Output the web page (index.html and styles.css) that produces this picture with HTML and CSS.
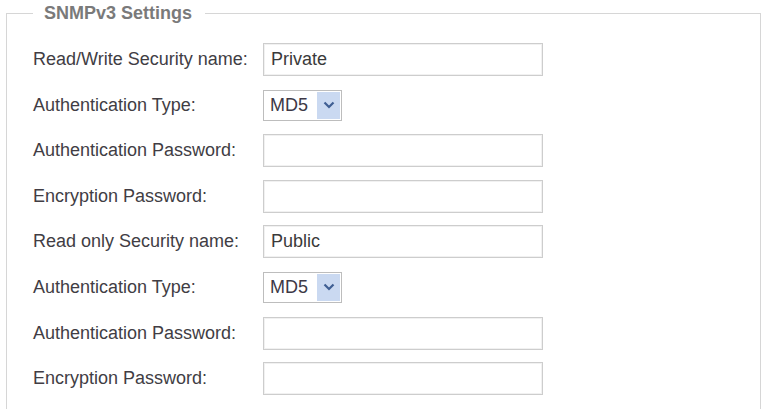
FILE: index.html
```html
<!DOCTYPE html>
<html>
<head>
<meta charset="utf-8">
<title>SNMPv3 Settings</title>
<link rel="stylesheet" href="styles.css">
</head>
<body>
<fieldset class="panel">
  <legend class="panel-title">SNMPv3 Settings</legend>
  <div class="rows">
    <label class="lbl">Read/Write Security name:</label>
    <input class="txt" type="text" value="Private">

    <label class="lbl">Authentication Type:</label>
    <span class="combo"><select class="combo-sel"><option>MD5</option></select><span class="combo-btn"><svg width="12" height="8" viewBox="0 0 12 8"><path d="M1.5 1.5 L6 6 L10.5 1.5" fill="none" stroke="#3f5f93" stroke-width="2.2"/></svg></span></span>

    <label class="lbl">Authentication Password:</label>
    <input class="txt" type="password" value="">

    <label class="lbl">Encryption Password:</label>
    <input class="txt" type="password" value="">

    <label class="lbl">Read only Security name:</label>
    <input class="txt" type="text" value="Public">

    <label class="lbl">Authentication Type:</label>
    <span class="combo"><select class="combo-sel"><option>MD5</option></select><span class="combo-btn"><svg width="12" height="8" viewBox="0 0 12 8"><path d="M1.5 1.5 L6 6 L10.5 1.5" fill="none" stroke="#3f5f93" stroke-width="2.2"/></svg></span></span>

    <label class="lbl">Authentication Password:</label>
    <input class="txt" type="password" value="">

    <label class="lbl">Encryption Password:</label>
    <input class="txt" type="password" value="">
  </div>
</fieldset>
</body>
</html>
```

FILE: styles.css
```css
html, body {
  margin: 0;
  padding: 0;
  background: #ffffff;
}

body {
  font-family: "Liberation Sans", Arial, sans-serif;
  overflow: hidden;
  height: 409px;
}

.panel {
  margin: 2.5px 7px 0 6px;
  padding: 19.5px 0 0 26px;
  border: 1px solid #d6d6d6;
  border-bottom: none;
  height: 406px;
  box-sizing: border-box;
}

.panel-title {
  padding: 0 13px 0 11px;
  font-size: 18px;
  line-height: 21px;
  font-weight: bold;
  color: #7a7a7a;
}

.rows {
  display: grid;
  grid-template-columns: 230px 280px;
  grid-auto-rows: 33px;
  row-gap: 12.6px;
  align-items: center;
}

.lbl {
  font-size: 18px;
  color: #413d44;
  white-space: nowrap;
}

.txt {
  box-sizing: border-box;
  width: 280px;
  height: 33px;
  margin: 0;
  padding: 0 7px;
  border: 1px solid #cdcdcd;
  box-shadow: inset 0 0 0 1px #f1f1f1;
  font-family: "Liberation Sans", Arial, sans-serif;
  font-size: 18px;
  color: #3a3a3a;
  background: #ffffff;
  outline: none;
}

.combo {
  box-sizing: border-box;
  display: inline-flex;
  align-items: stretch;
  width: 79px;
  height: 31px;
  border: 1px solid #bdbdbd;
  background: #ffffff;
  padding: 1px;
  justify-self: start;
}

.combo-sel {
  appearance: none;
  -webkit-appearance: none;
  flex: 1;
  min-width: 0;
  border: none;
  margin: 0;
  padding: 0 0 0 5px;
  background: transparent;
  font-family: "Liberation Sans", Arial, sans-serif;
  font-size: 18px;
  color: #3d3846;
  outline: none;
}

.combo-btn {
  width: 23px;
  background: #cad9f1;
  display: flex;
  align-items: center;
  justify-content: center;
}
```
